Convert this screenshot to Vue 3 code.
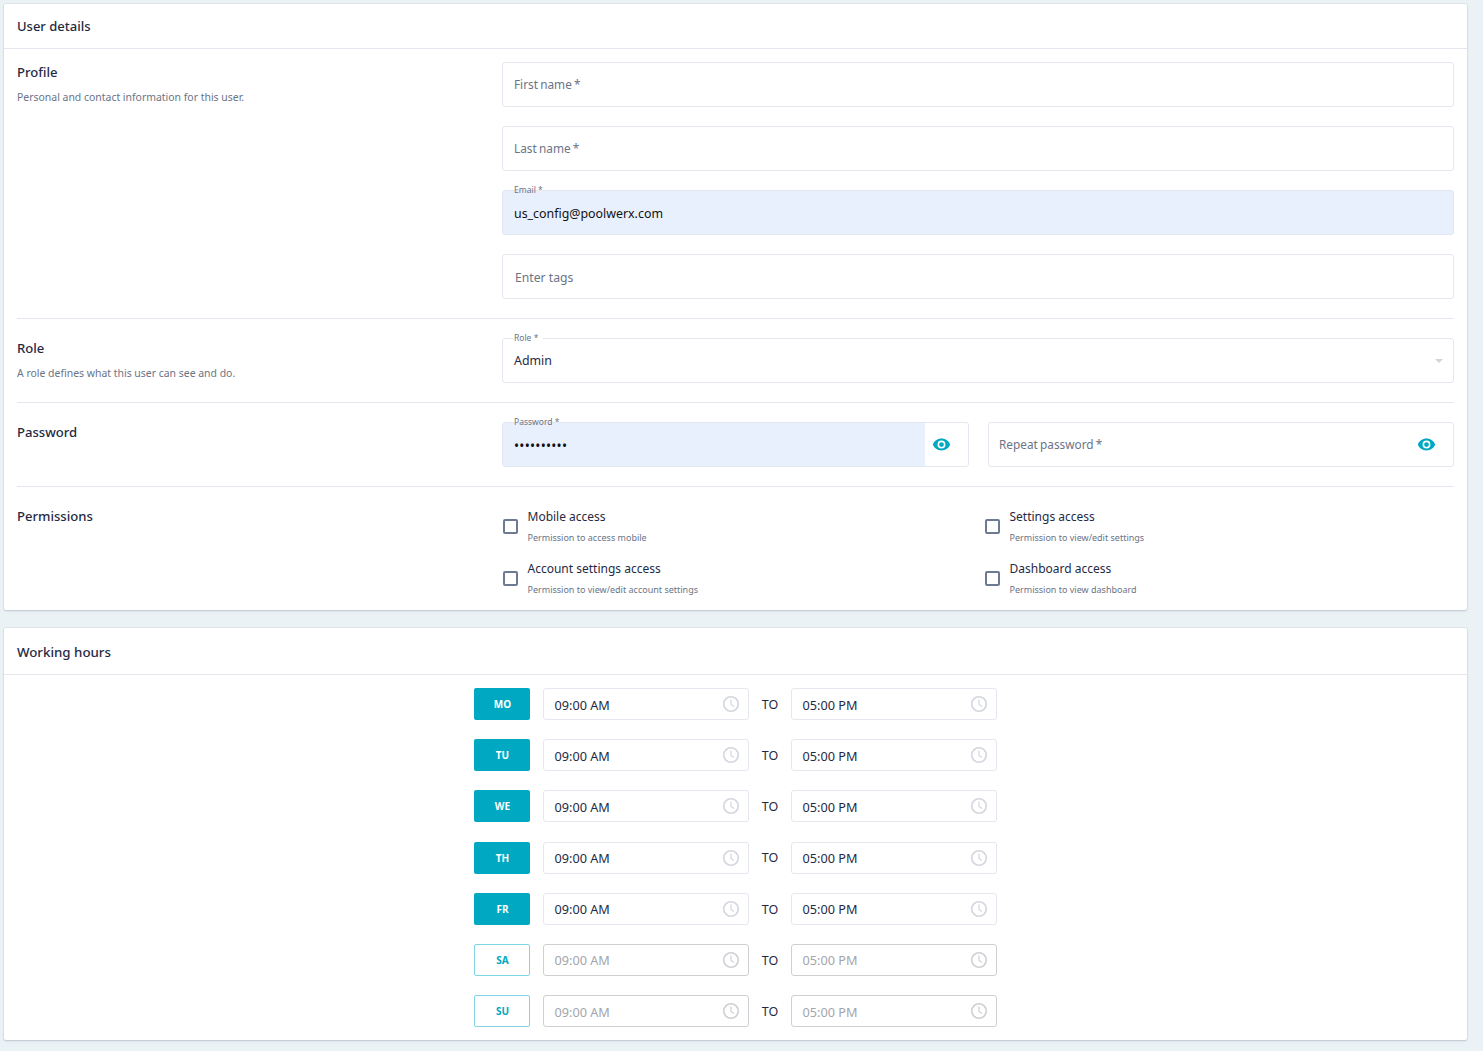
<script setup>
const perms = [
  { t: 'Mobile access', d: 'Permission to access mobile' },
  { t: 'Settings access', d: 'Permission to view/edit settings' },
  { t: 'Account settings access', d: 'Permission to view/edit account settings' },
  { t: 'Dashboard access', d: 'Permission to view dashboard' },
]
const days = [
  { n: 'MO', on: true }, { n: 'TU', on: true }, { n: 'WE', on: true }, { n: 'TH', on: true },
  { n: 'FR', on: true }, { n: 'SA', on: false }, { n: 'SU', on: false },
]
</script>

<template>
  <div class="page">
    <section class="card first">
      <header class="card-head">User details</header>
      <div class="section profile">
        <div class="side">
          <h3>Profile</h3>
          <p>Personal and contact information for this user.</p>
        </div>
        <div class="fields">
          <div class="field"><span class="ph">First name *</span></div>
          <div class="field"><span class="ph">Last name *</span></div>
          <div class="field filled">
            <label class="float">Email *</label>
            <span class="val">us_config@poolwerx.com</span>
          </div>
          <div class="field"><span class="ph tags">Enter tags</span></div>
        </div>
      </div>
      <div class="section role">
        <div class="side">
          <h3>Role</h3>
          <p>A role defines what this user can see and do.</p>
        </div>
        <div class="field select">
          <label class="float notch">Role *</label>
          <span class="val up">Admin</span>
          <i class="caret"></i>
        </div>
      </div>
      <div class="section password">
        <div class="side"><h3>Password</h3></div>
        <div class="pw-grid">
          <div class="field pw">
            <div class="pw-fill">
              <label class="float">Password *</label>
              <span class="val dots">••••••••••</span>
            </div>
            <svg class="eye" viewBox="0 0 24 24" width="19" height="19"><path fill="#00a9c1" d="M12 4.5C7 4.5 2.7 7.6 1 12c1.700 4.400 6 7.500 11 7.500s9.300-3.100 11-7.500c-1.700-4.400-6-7.500-11-7.500zM12 17a5 5 0 1 1 0-10 5 5 0 0 1 0 10zm0-8a3 3 0 1 0 0 6 3 3 0 0 0 0-6z"/></svg>
          </div>
          <div class="field pw">
            <span class="ph repeat">Repeat password *</span>
            <svg class="eye" viewBox="0 0 24 24" width="19" height="19"><path fill="#00a9c1" d="M12 4.500C7 4.500 2.700 7.600 1 12c1.700 4.400 6 7.500 11 7.500s9.300-3.100 11-7.500c-1.700-4.400-6-7.500-11-7.500zM12 17a5 5 0 1 1 0-10 5 5 0 0 1 0 10zm0-8a3 3 0 1 0 0 6 3 3 0 0 0 0-6z"/></svg>
          </div>
        </div>
      </div>
      <div class="section perms">
        <div class="side"><h3>Permissions</h3></div>
        <div class="perm-grid">
          <div v-for="p in perms" :key="p.t" class="perm">
            <span class="box"></span>
            <div>
              <div class="perm-t">{{ p.t }}</div>
              <div class="perm-d">{{ p.d }}</div>
            </div>
          </div>
        </div>
      </div>
    </section>

    <section class="card second">
      <header class="card-head hours-head">Working hours</header>
      <div class="hours">
        <div v-for="d in days" :key="d.n" class="row" :class="{ off: !d.on }">
          <div class="day">{{ d.n }}</div>
          <div class="time">
            <span>09:00 AM</span>
            <svg viewBox="0 0 18 18" width="18" height="18" class="clock"><circle cx="9" cy="9" r="7.300" fill="none" stroke="currentColor" stroke-width="1.600"/><path d="M9 4.500V9.500L12 11.500" fill="none" stroke="currentColor" stroke-width="1.200"/></svg>
          </div>
          <div class="to">TO</div>
          <div class="time">
            <span>05:00 PM</span>
            <svg viewBox="0 0 18 18" width="18" height="18" class="clock"><circle cx="9" cy="9" r="7.300" fill="none" stroke="currentColor" stroke-width="1.600"/><path d="M9 4.500V9.500L12 11.500" fill="none" stroke="currentColor" stroke-width="1.200"/></svg>
          </div>
        </div>
      </div>
    </section>
  </div>
</template>

<style>
html, body { background: #ebf2f5; }
</style>

<style scoped>
.page {
  padding: 4px 16px 0 4px;
  height: 1051px;
  box-sizing: border-box;
  overflow: hidden;
  font-family: "Noto Sans", sans-serif;
  color: #1f2a44;
  font-size: 13px;
}
.card {
  background: #fff;
  border-radius: 2px;
  box-shadow: 0 1px 2px rgba(60, 70, 90, .22), 0 0 0 1px rgba(60, 70, 90, .05);
}
.first { height: 606px; }
.second { margin-top: 18px; height: 412px; }
.card-head {
  box-sizing: border-box;
  padding: 13px 13px 0;
  font-size: 13px;
  line-height: 19px;
  font-weight: 500;
  border-bottom: 1px solid #e4e7f0;
  height: 45px;
}
.hours-head { height: 47px; padding-top: 15px; font-size: 13.300px; }
.section {
  margin: 0 13px;
  display: grid;
  grid-template-columns: 485px 1fr;
  box-sizing: border-box;
}
.profile { padding-top: 13px; height: 270px; border-bottom: 1px solid #e4e7f0; }
.role { padding-top: 19px; height: 84px; border-bottom: 1px solid #e4e7f0; }
.password { padding-top: 19px; height: 84px; border-bottom: 1px solid #e4e7f0; }
.perms { padding-top: 19px; }
h3 { margin: 1px 0 0; font-size: 13.100px; line-height: 19px; font-weight: 500; }
.side p { margin: 8px 0 0; font-size: 10.450px; line-height: 15px; color: #6b7486; }
.fields { display: flex; flex-direction: column; gap: 19px; }
.field {
  position: relative;
  height: 45px;
  box-sizing: border-box;
  border: 1px solid #e4e7f0;
  border-radius: 3px;
  padding: 0 11px;
  display: flex;
  align-items: center;
}
.ph { color: #6b7486; font-size: 11.800px; margin-top: -2px; word-spacing: -.8px; }
.tags { margin-left: 1px; margin-top: 2px; font-size: 12.200px; word-spacing: 0; }
.val { color: #1f2a44; font-size: 12.400px; margin-top: 2px; }
.up { margin-top: 0; }
.filled { background: #e8f0fd; }
.filled .val { color: #111; }
.float {
  position: absolute;
  left: 11px;
  top: -7px;
  font-size: 8.500px;
  line-height: 12px;
  color: #6b7486;
  background: linear-gradient(#fff 50%, transparent 50%);
  padding-right: 3px;
}
.notch { background: #fff; padding-right: 5px; }
.caret {
  position: absolute;
  right: 10px;
  top: 20px;
  border-left: 4px solid transparent;
  border-right: 4px solid transparent;
  border-top: 4px solid #d3d6de;
}
.pw-grid { display: grid; grid-template-columns: 467px 466px; gap: 19px; }
.pw { padding: 0 10px; justify-content: space-between; }
.pw-fill {
  position: absolute;
  left: 0; top: 0; bottom: 0;
  width: 422px;
  background: #e8f0fd;
  display: flex;
  align-items: center;
  padding-left: 11px;
  box-sizing: border-box;
}
.pw-fill .float { left: 11px; }
.dots { color: #111; font-size: 13.500px; letter-spacing: .25px; }
.eye { position: absolute; right: 17px; top: 11.500px; }
.perm-grid {
  display: grid;
  grid-template-columns: 482px 1fr;
  row-gap: 10px;
  margin-top: -1px;
}
.perm { display: flex; align-items: center; height: 42px; padding-left: 1px; }
.box {
  width: 10.500px;
  height: 11px;
  border: 2px solid #6d7a91;
  border-radius: 2px;
  margin-right: 10px;
  margin-top: 0;
  flex: none;
}
.perm-t { font-size: 12px; line-height: 17px; color: #1f2a44; }
.perm-d { font-size: 9px; line-height: 13px; margin-top: 6px; color: #6b7486; }
.hours {
  padding-top: 13px;
  display: flex;
  flex-direction: column;
  gap: 19.200px;
  align-items: center;
}
.row { display: flex; align-items: center; height: 32px; margin-left: -1px; }
.day {
  width: 56px;
  height: 32px;
  border-radius: 2px;
  background: #00a9c1;
  color: #fff;
  font-size: 10px;
  font-weight: 700;
  display: flex;
  align-items: center;
  justify-content: center;
  margin-right: 13px;
  padding-left: 2px;
  box-sizing: border-box;
}
.time {
  width: 206px;
  height: 32px;
  box-sizing: border-box;
  border: 1px solid #e4e7f0;
  border-radius: 3px;
  display: flex;
  align-items: center;
  justify-content: space-between;
  padding: 1px 7.500px 0 11px;
  font-size: 12.700px;
  color: #1f2a44;
}
.clock { color: #d3d6de; margin-top: -1px; }
.to { width: 42px; padding-left: 1px; box-sizing: border-box; text-align: center; font-size: 12.500px; margin-top: .5px; }
.off .day { background: #fff; border: 1px solid #7dd6e2; color: #00a9c1; }
.off .time { border-color: #cfd0d4; color: #a3a5ab; }
.off .clock { color: #cfd0d4; }
</style>
